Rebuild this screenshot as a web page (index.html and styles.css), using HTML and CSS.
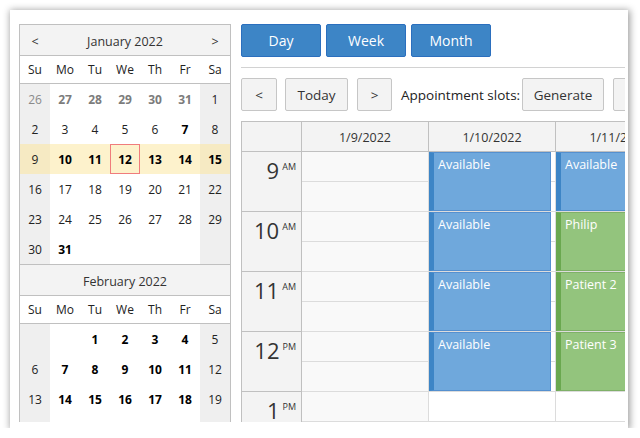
FILE: index.html
```html
<!DOCTYPE html>
<html lang="en">
<head>
<meta charset="utf-8">
<title>Appointment scheduling</title>
<link rel="stylesheet" href="styles.css">
</head>
<body>
<div class="card">
  <div class="clip">
    <aside class="nav">
      <section class="month">
        <div class="m-head"><span class="m-arrow">&lt;</span><span class="m-title">January 2022</span><span class="m-arrow">&gt;</span></div>
        <div class="m-names"><span>Su</span><span>Mo</span><span>Tu</span><span>We</span><span>Th</span><span>Fr</span><span>Sa</span></div>
        <div class="wk"><span class="d we other">26</span><span class="d other b">27</span><span class="d other b">28</span><span class="d other b">29</span><span class="d other b">30</span><span class="d other b">31</span><span class="d we">1</span></div>
        <div class="wk"><span class="d we">2</span><span class="d">3</span><span class="d">4</span><span class="d">5</span><span class="d">6</span><span class="d b">7</span><span class="d we">8</span></div>
        <div class="wk sel"><span class="d we">9</span><span class="d b">10</span><span class="d b">11</span><span class="d b today">12</span><span class="d b">13</span><span class="d b">14</span><span class="d we b">15</span></div>
        <div class="wk"><span class="d we">16</span><span class="d">17</span><span class="d">18</span><span class="d">19</span><span class="d">20</span><span class="d">21</span><span class="d we">22</span></div>
        <div class="wk"><span class="d we">23</span><span class="d">24</span><span class="d">25</span><span class="d">26</span><span class="d">27</span><span class="d">28</span><span class="d we">29</span></div>
        <div class="wk"><span class="d we">30</span><span class="d b">31</span><span class="d"></span><span class="d"></span><span class="d"></span><span class="d"></span><span class="d we"></span></div>
      </section>
      <section class="month">
        <div class="m-head"><span class="m-arrow"></span><span class="m-title">February 2022</span><span class="m-arrow"></span></div>
        <div class="m-names"><span>Su</span><span>Mo</span><span>Tu</span><span>We</span><span>Th</span><span>Fr</span><span>Sa</span></div>
        <div class="wk"><span class="d we"></span><span class="d"></span><span class="d b">1</span><span class="d b">2</span><span class="d b">3</span><span class="d b">4</span><span class="d we">5</span></div>
        <div class="wk"><span class="d we">6</span><span class="d b">7</span><span class="d b">8</span><span class="d b">9</span><span class="d b">10</span><span class="d b">11</span><span class="d we">12</span></div>
        <div class="wk"><span class="d we">13</span><span class="d b">14</span><span class="d b">15</span><span class="d b">16</span><span class="d b">17</span><span class="d b">18</span><span class="d we">19</span></div>
        <div class="wk"><span class="d we"></span><span class="d"></span><span class="d"></span><span class="d"></span><span class="d"></span><span class="d"></span><span class="d we"></span></div>
      </section>
    </aside>

    <main class="main">
      <div class="views">
        <button class="vbtn">Day</button>
        <button class="vbtn">Week</button>
        <button class="vbtn">Month</button>
      </div>
      <hr class="sep">
      <div class="toolbar">
        <button class="gbtn w-prev">&lt;</button>
        <button class="gbtn w-today">Today</button>
        <button class="gbtn w-next">&gt;</button>
        <span class="tb-label">Appointment slots:</span>
        <button class="gbtn w-gen">Generate</button>
        <button class="gbtn w-clear"></button>
      </div>

      <div class="cal">
        <div class="timecol">
          <div class="corner"></div>
          <div class="hour"><span class="hnum">9</span><span class="ampm">AM</span></div>
          <div class="hour"><span class="hnum">10</span><span class="ampm">AM</span></div>
          <div class="hour"><span class="hnum">11</span><span class="ampm">AM</span></div>
          <div class="hour"><span class="hnum">12</span><span class="ampm">PM</span></div>
          <div class="hour"><span class="hnum">1</span><span class="ampm">PM</span></div>
        </div>
        <div class="daycol off">
          <div class="dhead">1/9/2022</div>
          <div class="slot"><div class="half"></div><div class="half"></div></div>
          <div class="slot"><div class="half"></div><div class="half"></div></div>
          <div class="slot"><div class="half"></div><div class="half"></div></div>
          <div class="slot"><div class="half"></div><div class="half"></div></div>
          <div class="slot"><div class="half"></div><div class="half"></div></div>
        </div>
        <div class="daycol">
          <div class="dhead">1/10/2022</div>
          <div class="slot"><div class="half"></div><div class="half"></div><div class="ev free">Available</div></div>
          <div class="slot"><div class="half"></div><div class="half"></div><div class="ev free">Available</div></div>
          <div class="slot"><div class="half"></div><div class="half"></div><div class="ev free">Available</div></div>
          <div class="slot"><div class="half"></div><div class="half"></div><div class="ev free">Available</div></div>
          <div class="slot"><div class="half"></div><div class="half"></div></div>
        </div>
        <div class="daycol">
          <div class="dhead">1/11/2022</div>
          <div class="slot"><div class="half"></div><div class="half"></div><div class="ev free">Available</div></div>
          <div class="slot"><div class="half"></div><div class="half"></div><div class="ev booked">Philip</div></div>
          <div class="slot"><div class="half"></div><div class="half"></div><div class="ev booked">Patient 2</div></div>
          <div class="slot"><div class="half"></div><div class="half"></div><div class="ev booked">Patient 3</div></div>
          <div class="slot"><div class="half"></div><div class="half"></div></div>
        </div>
      </div>
    </main>
  </div>
</div>
</body>
</html>
```

FILE: styles.css
```css
* { box-sizing: border-box; }

html, body {
  margin: 0;
  padding: 0;
  background: #ffffff;
}

body {
  font-family: "Open Sans", "Noto Sans", "DejaVu Sans", sans-serif;
  color: #333333;
  padding: 10px 0 0 10px;
}

.card {
  width: 618px;
  height: 418px;
  background: #ffffff;
  padding: 14px 3px 6px 9px;
  box-shadow: 1px 1px 7px 1px rgba(0, 0, 0, 0.38);
}

.clip {
  width: 606px;
  height: 398px;
  overflow: hidden;
  display: flex;
  gap: 10px;
  align-items: flex-start;
}

/* ---------- navigator ---------- */
.nav {
  flex: none;
  width: 212px;
  border-left: 1px solid #c0c0c0;
  border-right: 1px solid #c0c0c0;
  font-size: 12px;
}

.month {
  border-top: 1px solid #c0c0c0;
}

.m-head {
  height: 31px;
  display: grid;
  grid-template-columns: 30px 1fr 30px;
  align-items: center;
  text-align: center;
  background: #f3f3f3;
  border-bottom: 1px solid #c0c0c0;
  color: #333333;
  font-size: 12.5px;
  padding-top: 2px;
}

.m-names {
  height: 28px;
  display: grid;
  grid-template-columns: repeat(7, 30px);
  align-items: center;
  text-align: center;
  border-bottom: 1px solid #c0c0c0;
  color: #222222;
}

.wk {
  height: 30px;
  display: grid;
  grid-template-columns: repeat(7, 30px);
}

.d {
  display: flex;
  align-items: center;
  justify-content: center;
  color: #222222;
}

.d.we { background: #efefef; }
.d.b { font-weight: 700; color: #000000; }
.d.other { color: #8a8a8a; }
.d.other.b { color: #7c7c7c; }

.wk.sel .d { background: #fdf2cc; }
.wk.sel .d.we { background: #f6eac3; }

.d.today { box-shadow: inset 0 0 0 1px #f07c7c; }

/* ---------- main ---------- */
.main {
  flex: none;
  width: 384px;
  height: 398px;
  overflow: hidden;
}

.views {
  display: flex;
  gap: 5px;
}

.vbtn {
  width: 80px;
  height: 33px;
  background: #3d85c6;
  border: 1px solid #2b6fbe;
  border-radius: 2px;
  color: #ffffff;
  font-family: inherit;
  font-size: 14px;
  padding: 0;
}

.sep {
  margin: 10px 0 10px 0;
  border: 0;
  border-top: 1px solid #d2d2d2;
  height: 0;
}

.toolbar {
  display: flex;
  align-items: center;
  height: 33px;
  white-space: nowrap;
  width: 420px;
}

.gbtn {
  flex: none;
  height: 33px;
  background: #f3f3f3;
  border: 1px solid #c6c6c6;
  border-radius: 2px;
  color: #333333;
  font-family: inherit;
  font-size: 13.5px;
  padding: 0;
}

.w-prev { width: 36px; margin-right: 8px; }
.w-today { width: 63px; margin-right: 9px; }
.w-next { width: 35px; margin-right: 9px; }
.w-gen { width: 82px; margin-right: 9px; }
.w-clear { width: 60px; }

.tb-label {
  flex: none;
  width: 121px;
  font-size: 13.5px;
  color: #222222;
}

/* ---------- calendar ---------- */
.cal {
  display: flex;
  margin-top: 10px;
  width: 600px;
}

.timecol {
  flex: none;
  width: 61px;
}

.corner {
  height: 31px;
  background: #f3f3f3;
  border: 1px solid #c0c0c0;
}

.hour {
  height: 60px;
  background: #f3f3f3;
  border-left: 1px solid #c0c0c0;
  border-right: 1px solid #c0c0c0;
  border-bottom: 1px solid #c0c0c0;
  display: flex;
  justify-content: flex-end;
  align-items: flex-start;
  padding: 8px 5px 0 0;
  color: #333333;
}

.hnum {
  font-size: 22px;
  line-height: 20px;
}

.ampm {
  font-size: 9px;
  line-height: 9px;
  margin-left: 3px;
  margin-top: 2px;
}

.daycol {
  flex: none;
  width: 127px;
  background: #ffffff;
}

.daycol.off { background: #f9f9f9; }

.dhead {
  height: 31px;
  background: #f3f3f3;
  border-top: 1px solid #c0c0c0;
  border-bottom: 1px solid #c0c0c0;
  border-right: 1px solid #c0c0c0;
  display: flex;
  align-items: center;
  justify-content: center;
  font-size: 12.5px;
  color: #333333;
  padding-top: 1px;
}

.slot {
  position: relative;
  height: 60px;
}

.half {
  height: 30px;
  border-bottom: 1px solid #dcdcdc;
  border-right: 1px solid #dcdcdc;
}

.ev {
  position: absolute;
  top: 0;
  left: 0;
  width: 122px;
  height: 59px;
  color: #ffffff;
  font-size: 12.5px;
  line-height: 16px;
  padding: 4px 4px;
}

.ev.free {
  background: #6fa8dc;
  border: 1px solid #5590cf;
  border-left: 5px solid #3d85c6;
}

.ev.booked {
  background: #93c47d;
  border: 1px solid #7fb068;
  border-left: 5px solid #6aa84f;
}
```
